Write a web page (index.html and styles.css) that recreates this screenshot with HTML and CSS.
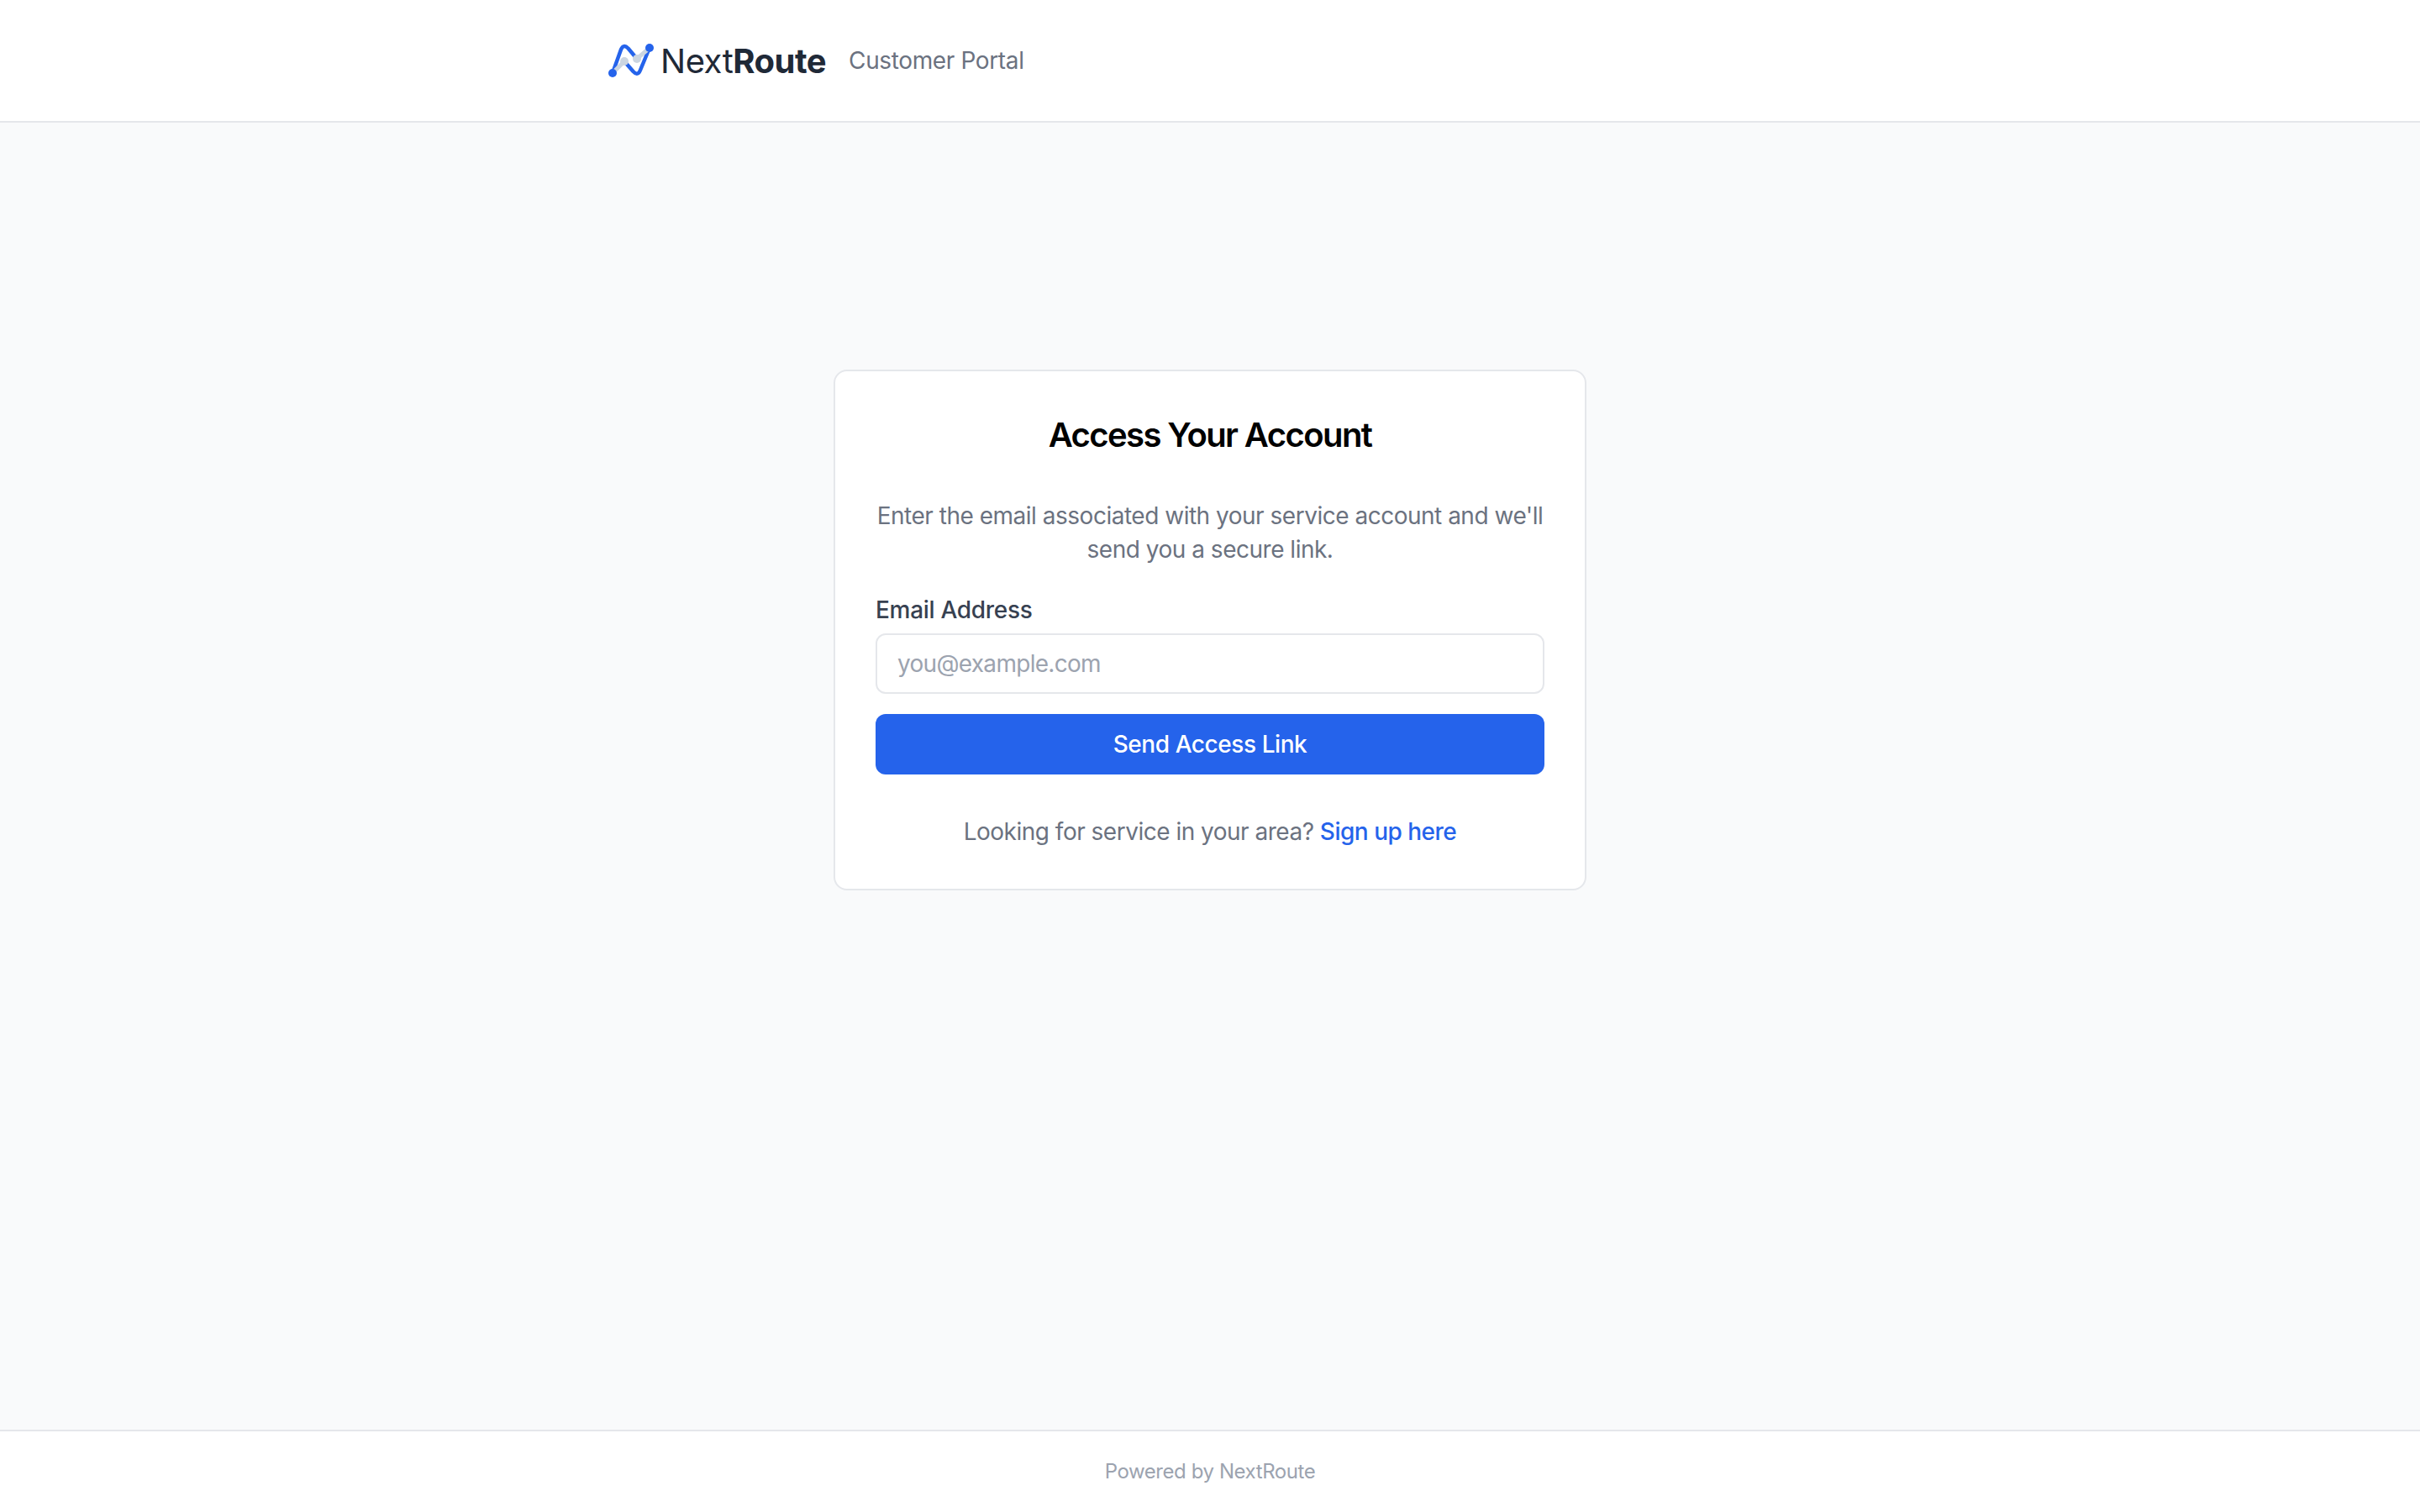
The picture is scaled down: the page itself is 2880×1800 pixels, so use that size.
FILE: index.html
```html
<!DOCTYPE HTML>
<html>
<head>
<title>NextRoute Customer Portal</title>
<link rel="stylesheet" href="styles.css">
</head>
<body>
  <header class="top-bar">
    <div class="top-inner">
      <a class="logo" href="#">
        <svg class="logo-icon" viewBox="0 0 64 48" fill="none" stroke-linecap="round" stroke-linejoin="round">
          <path class="logo-front" d="M9 39 L19 11 Q22 4 27.5 9.5 L38 22"/>
          <path class="logo-front" d="M23 25 L33.5 37 Q39 43 42 35.5 L53 9"/>
          <path class="logo-back" d="M9 39 L23 25 M38 22 L53 9"/>
          <circle class="logo-node" cx="23" cy="25" r="5"/>
          <circle class="logo-node" cx="38" cy="22" r="5"/>
          <circle class="logo-dot" cx="9" cy="39" r="5"/>
          <circle class="logo-dot" cx="53" cy="9" r="5"/>
        </svg>
        <span class="logo-text">Next<b>Route</b></span>
      </a>
      <span class="portal-name">Customer Portal</span>
    </div>
  </header>

  <main class="content">
    <div class="card">
      <h1>Access Your Account</h1>
      <p class="intro">Enter the email associated with your service account and we'll send you a secure link.</p>
      <form class="access-form">
        <label for="email">Email Address</label>
        <input type="email" id="email" placeholder="you@example.com" />
        <button type="button">Send Access Link</button>
      </form>
      <p class="signup">Looking for service in your area? <a href="#">Sign up here</a></p>
    </div>
  </main>

  <footer class="bottom-bar">Powered by NextRoute</footer>
</body>
</html>
```
FILE: styles.css
```css
* {
  box-sizing: border-box;
}

html, body {
  height: 100%;
}

body {
  margin: 0;
  display: flex;
  flex-direction: column;
  background: #f9fafb;
  color: #1f2937;
  font-family: Inter, "Liberation Sans", sans-serif;
}

.top-bar {
  height: 146px;
  flex: none;
  background: #fff;
  border-bottom: 2px solid #e5e7eb;
}

.top-inner {
  width: 1440px;
  height: 100%;
  margin: 0 auto;
  display: flex;
  align-items: center;
  gap: 27px;
}

.logo {
  display: flex;
  align-items: center;
  gap: 2px;
  color: #1f2937;
  text-decoration: none;
}

.logo-icon {
  width: 64px;
  height: 48px;
}

.logo-back {
  stroke: #cbd5e1;
  stroke-width: 5;
}

.logo-node {
  fill: #cbd5e1;
}

.logo-front {
  stroke: #2563eb;
  stroke-width: 4.5;
}

.logo-dot {
  fill: #2563eb;
}

.logo-text {
  font-size: 40px;
  letter-spacing: -0.5px;
}

.logo-text b {
  font-weight: 700;
}

.portal-name {
  font-size: 28px;
  letter-spacing: -0.37px;
  color: #6b7280;
}

.content {
  flex: 1;
  padding-top: 294px;
}

.card {
  width: 896px;
  margin: 0 auto;
  padding: 48px;
  background: #fff;
  border: 2px solid #e5e7eb;
  border-radius: 16px;
}

h1 {
  margin: 0;
  color: #000;
  font-size: 40px;
  font-weight: 600;
  line-height: 56px;
  letter-spacing: -1.58px;
  text-align: center;
}

.intro {
  margin: 48px 0 0;
  color: #6b7280;
  font-size: 28px;
  line-height: 40px;
  letter-spacing: -0.49px;
  text-align: center;
}

.access-form {
  margin-top: 32px;
  display: flex;
  flex-direction: column;
}

label {
  color: #374151;
  font-size: 28px;
  font-weight: 500;
  line-height: 40px;
  letter-spacing: -0.3px;
}

input {
  height: 72px;
  margin-top: 8px;
  padding: 0 24px;
  background: #fff;
  border: 2px solid #e5e7eb;
  border-radius: 12px;
  font-family: inherit;
  font-size: 28px;
  letter-spacing: -0.7px;
}

input::placeholder {
  color: #9ca3af;
}

button {
  height: 72px;
  margin-top: 24px;
  background: #2563eb;
  border: 0;
  border-radius: 12px;
  color: #fff;
  font-family: inherit;
  font-size: 28px;
  font-weight: 500;
  letter-spacing: -0.43px;
}

.signup {
  margin: 48px 0 0;
  color: #6b7280;
  font-size: 28px;
  line-height: 40px;
  letter-spacing: -0.5px;
  text-align: center;
}

.signup a {
  color: #2563eb;
  font-weight: 500;
  text-decoration: none;
}

.bottom-bar {
  height: 98px;
  flex: none;
  padding-top: 32px;
  background: #fff;
  border-top: 2px solid #e5e7eb;
  color: #9ca3af;
  font-size: 24px;
  line-height: 32px;
  letter-spacing: -0.42px;
  text-align: center;
}
```
